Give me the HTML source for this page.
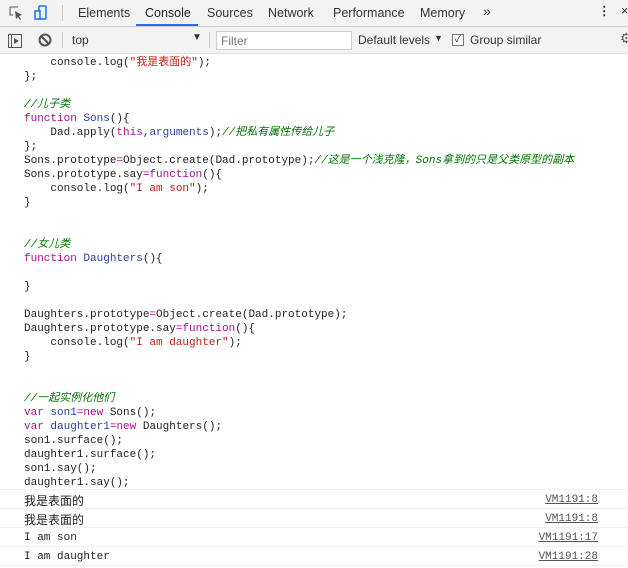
<!DOCTYPE html>
<html><head><meta charset="utf-8"><style>
body{margin:0;width:628px;height:566px;overflow:hidden;background:#fff;font-family:"Liberation Sans","Noto Sans CJK SC",sans-serif;position:relative}
.tb1{position:absolute;left:0;top:0;width:628px;height:26px;background:#f3f3f3;border-bottom:1px solid #ccc}
.tb2{position:absolute;left:0;top:27px;width:628px;height:26px;background:#f3f3f3;border-bottom:1px solid #ddd}
.t{position:absolute;font-size:12.5px;color:#333;top:6px}
.tb2 .t{font-size:12px}
.code{position:absolute;left:24px;top:56px;font-family:"Liberation Mono","Noto Sans CJK SC",monospace;font-size:11px;line-height:14px;color:#222;white-space:pre}
.k{color:#aa0d91}.f{color:#2a3fa0}.s{color:#c41a16}.c{color:#007400;font-style:italic}
.row{position:absolute;left:0;width:628px;height:18px;border-top:1px solid #f0f0f0;font-family:"Liberation Mono","Noto Sans CJK SC",monospace;font-size:11px;line-height:21px;color:#222}
.row span.l{position:absolute;left:24px}
.row span.r{position:absolute;right:30px;color:#555;text-decoration:underline}
</style></head><body>
<div class="tb1">
<svg style="position:absolute;left:9px;top:6px" width="14" height="14"><path d="M1 1h8M1 1v8h3" stroke="#555" fill="none"/><path d="M6 5l7 4-3 1 2 3-1 1-2-3-2 2z" fill="#555"/></svg>
<svg style="position:absolute;left:34px;top:5px" width="14" height="16"><rect x="5" y="1" width="7" height="13" rx="1" stroke="#1a73e8" stroke-width="1.5" fill="none"/><rect x="1" y="6" width="5" height="8" stroke="#1a73e8" stroke-width="1.5" fill="#f3f3f3"/></svg>
<div style="position:absolute;left:62px;top:5px;width:1px;height:16px;background:#ccc"></div>
<span class="t" style="left:78px">Elements</span>
<span class="t" style="left:145px;color:#222">Console</span>
<div style="position:absolute;left:136px;top:24px;width:62px;height:2px;background:#1a73e8"></div>
<span class="t" style="left:207px">Sources</span>
<span class="t" style="left:268px">Network</span>
<span class="t" style="left:333px">Performance</span>
<span class="t" style="left:420px">Memory</span>
<span class="t" style="left:483px;top:3px;font-size:14px">»</span>
<span class="t" style="left:598px;top:3px;font-weight:bold">⋮</span>
<span class="t" style="left:621px;top:4px">×</span>
</div>
<div class="tb2">
<svg style="position:absolute;left:8px;top:7px" width="14" height="14"><rect x="0.5" y="0.5" width="13" height="13" stroke="#555" fill="none"/><path d="M3.5 1v12" stroke="#555"/><path d="M6 4l5 3-5 3z" fill="#555"/></svg>
<svg style="position:absolute;left:38px;top:6px" width="14" height="14"><circle cx="7" cy="7" r="5.5" stroke="#555" stroke-width="2" fill="none"/><path d="M3 3l8 8" stroke="#555" stroke-width="2"/></svg>
<div style="position:absolute;left:62px;top:5px;width:1px;height:16px;background:#ccc"></div>
<span class="t" style="left:72px;top:6px">top</span>
<span class="t" style="left:192px;top:5px;font-size:10px">▼</span>
<div style="position:absolute;left:209px;top:5px;width:1px;height:16px;background:#ccc"></div>
<div style="position:absolute;left:216px;top:4px;width:134px;height:17px;border:1px solid #ccc;background:#fff"><span style="position:absolute;left:4px;top:2px;font-size:12px;color:#777">Filter</span></div>
<span class="t" style="left:358px;top:6px">Default levels</span>
<span class="t" style="left:434px;top:6px;font-size:9px">▼</span>
<div style="position:absolute;left:452px;top:7px;width:10px;height:10px;border:1px solid #777;background:#fff;font-size:10px;line-height:10px;text-align:center;color:#333">✓</div>
<span class="t" style="left:470px;top:6px">Group similar</span>
<span class="t" style="left:620px;top:3px;font-size:14px;color:#555">⚙</span>
</div>
<div class="code">    console.log(<span class="s">"我是表面的"</span>);
};

<span class="c">//儿子类</span>
<span class="k">function</span> <span class="f">Sons</span>(){
    Dad.apply(<span class="k">this</span>,<span class="f">arguments</span>);<span class="c">//把私有属性传给儿子</span>
};
Sons.prototype<span class="k">=</span>Object.create(Dad.prototype);<span class="c">//这是一个浅克隆，Sons拿到的只是父类原型的副本</span>
Sons.prototype.say<span class="k">=function</span>(){
    console.log(<span class="s">"I am son"</span>);
}


<span class="c">//女儿类</span>
<span class="k">function</span> <span class="f">Daughters</span>(){

}

Daughters.prototype<span class="k">=</span>Object.create(Dad.prototype);
Daughters.prototype.say<span class="k">=function</span>(){
    console.log(<span class="s">"I am daughter"</span>);
}


<span class="c">//一起实例化他们</span>
<span class="k">var</span> <span class="f">son1</span><span class="k">=new</span> Sons();
<span class="k">var</span> <span class="f">daughter1</span><span class="k">=new</span> Daughters();
son1.surface();
daughter1.surface();
son1.say();
daughter1.say();</div>
<div class="row" style="top:489px"><span class="l" style="font-family:'Noto Sans CJK SC',sans-serif;font-size:12px">我是表面的</span><span class="r">VM1191:8</span></div>
<div class="row" style="top:508px"><span class="l" style="font-family:'Noto Sans CJK SC',sans-serif;font-size:12px">我是表面的</span><span class="r">VM1191:8</span></div>
<div class="row" style="top:527px"><span class="l">I am son</span><span class="r">VM1191:17</span></div>
<div class="row" style="top:546px;border-bottom:1px solid #f0f0f0"><span class="l">I am daughter</span><span class="r">VM1191:28</span></div>
</body></html>
